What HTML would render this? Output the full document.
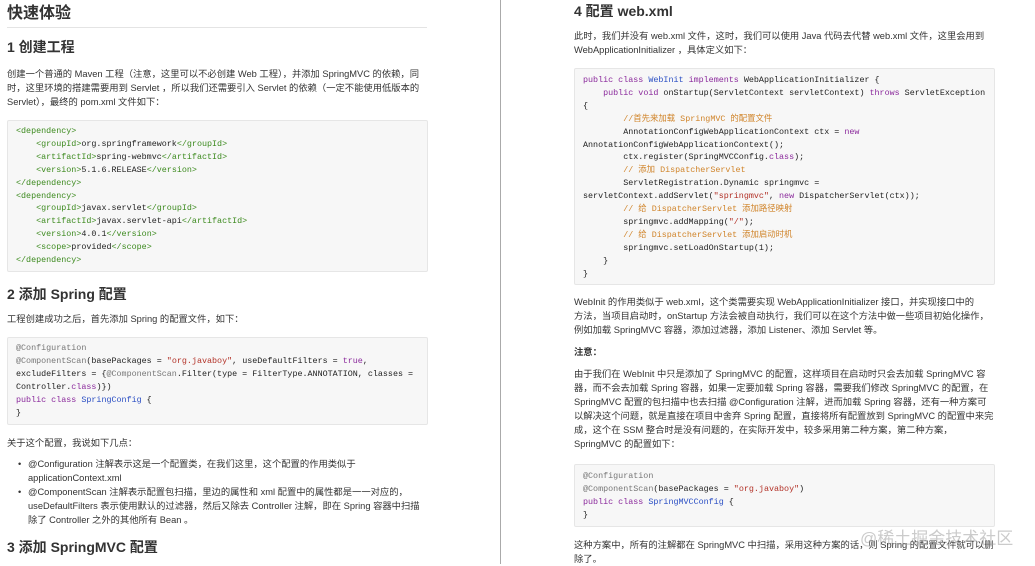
<!DOCTYPE html>
<html><head><meta charset="utf-8"><style>
*{margin:0;padding:0;box-sizing:border-box}
body{width:1035px;height:564px;background:#fff;position:relative;overflow:hidden;font-family:"Liberation Sans","Noto Sans CJK SC",sans-serif;color:#333}
.a{position:absolute;white-space:nowrap}
.p{font-size:9.3px;line-height:14px}
.h1{font-size:16px;font-weight:bold;line-height:20px}
.h2{font-size:14px;font-weight:bold;line-height:20px}
.box{position:absolute;background:#f7f7f7;border:1px solid #e6e6e6;border-radius:2px}
.c{position:absolute;font-family:"Liberation Mono","Noto Sans CJK SC",monospace;font-size:8.4px;line-height:12.9px;white-space:pre;color:#222}
.t{color:#3c8a1e}.k{color:#8b2a9c}.n{color:#2b4fc4}.s{color:#b23026}.m{color:#d0842a}.g{color:#777}
</style></head><body>
<div class="a" style="left:500px;top:0;width:1px;height:564px;background:#aaa"></div>

<div class="a h1" style="left:7px;top:4px">快速体验</div>
<div class="a" style="left:7px;top:27px;width:420px;height:1px;background:#e4e4e4"></div>
<div class="a h2" style="left:7px;top:37px">1 创建工程</div>
<div class="a p" style="left:7px;top:67px">创建一个普通的 Maven 工程（注意，这里可以不必创建 Web 工程），并添加 SpringMVC 的依赖，同<br>时，这里环境的搭建需要用到 Servlet ，所以我们还需要引入 Servlet 的依赖（一定不能使用低版本的<br>Servlet），最终的 pom.xml 文件如下：</div>
<div class="box" style="left:7px;top:120px;width:421px;height:152px"></div>
<div class="c" style="left:16px;top:125px"><span class="t">&lt;dependency&gt;</span>
    <span class="t">&lt;groupId&gt;</span>org.springframework<span class="t">&lt;/groupId&gt;</span>
    <span class="t">&lt;artifactId&gt;</span>spring-webmvc<span class="t">&lt;/artifactId&gt;</span>
    <span class="t">&lt;version&gt;</span>5.1.6.RELEASE<span class="t">&lt;/version&gt;</span>
<span class="t">&lt;/dependency&gt;</span>
<span class="t">&lt;dependency&gt;</span>
    <span class="t">&lt;groupId&gt;</span>javax.servlet<span class="t">&lt;/groupId&gt;</span>
    <span class="t">&lt;artifactId&gt;</span>javax.servlet-api<span class="t">&lt;/artifactId&gt;</span>
    <span class="t">&lt;version&gt;</span>4.0.1<span class="t">&lt;/version&gt;</span>
    <span class="t">&lt;scope&gt;</span>provided<span class="t">&lt;/scope&gt;</span>
<span class="t">&lt;/dependency&gt;</span></div>

<div class="a h2" style="left:7px;top:284px">2 添加 Spring 配置</div>
<div class="a p" style="left:7px;top:312px">工程创建成功之后，首先添加 Spring 的配置文件，如下：</div>
<div class="box" style="left:7px;top:337px;width:421px;height:88px"></div>
<div class="c" style="left:16px;top:342px"><span class="g">@Configuration</span>
<span class="g">@ComponentScan</span>(basePackages = <span class="s">"org.javaboy"</span>, useDefaultFilters = <span class="k">true</span>,
excludeFilters = {<span class="g">@ComponentScan</span>.Filter(type = FilterType.ANNOTATION, classes =
Controller.<span class="k">class</span>)})
<span class="k">public class</span> <span class="n">SpringConfig</span> {
}</div>
<div class="a p" style="left:7px;top:436px">关于这个配置，我说如下几点：</div>
<div class="a p" style="left:18px;top:457px">•</div>
<div class="a p" style="left:28px;top:457px">@Configuration 注解表示这是一个配置类，在我们这里，这个配置的作用类似于<br>applicationContext.xml</div>
<div class="a p" style="left:18px;top:485px">•</div>
<div class="a p" style="left:28px;top:485px">@ComponentScan 注解表示配置包扫描，里边的属性和 xml 配置中的属性都是一一对应的，<br>useDefaultFilters 表示使用默认的过滤器，然后又除去 Controller 注解，即在 Spring 容器中扫描<br>除了 Controller 之外的其他所有 Bean 。</div>
<div class="a h2" style="left:7px;top:537px">3 添加 SpringMVC 配置</div>

<div class="a h2" style="left:574px;top:1px">4 配置 web.xml</div>
<div class="a p" style="left:574px;top:29px">此时，我们并没有 web.xml 文件，这时，我们可以使用 Java 代码去代替 web.xml 文件，这里会用到<br>WebApplicationInitializer ，具体定义如下：</div>
<div class="box" style="left:574px;top:68px;width:421px;height:217px"></div>
<div class="c" style="left:583px;top:74px"><span class="k">public class</span> <span class="n">WebInit</span> <span class="k">implements</span> WebApplicationInitializer {
    <span class="k">public void</span> onStartup(ServletContext servletContext) <span class="k">throws</span> ServletException
{
        <span class="m">//首先来加载 SpringMVC 的配置文件</span>
        AnnotationConfigWebApplicationContext ctx = <span class="k">new</span>
AnnotationConfigWebApplicationContext();
        ctx.register(SpringMVCConfig.<span class="k">class</span>);
        <span class="m">// 添加 DispatcherServlet</span>
        ServletRegistration.Dynamic springmvc =
servletContext.addServlet(<span class="s">"springmvc"</span>, <span class="k">new</span> DispatcherServlet(ctx));
        <span class="m">// 给 DispatcherServlet 添加路径映射</span>
        springmvc.addMapping(<span class="s">"/"</span>);
        <span class="m">// 给 DispatcherServlet 添加启动时机</span>
        springmvc.setLoadOnStartup(1);
    }
}</div>
<div class="a p" style="left:574px;top:295px">WebInit 的作用类似于 web.xml，这个类需要实现 WebApplicationInitializer 接口，并实现接口中的<br>方法，当项目启动时，onStartup 方法会被自动执行，我们可以在这个方法中做一些项目初始化操作，<br>例如加载 SpringMVC 容器，添加过滤器，添加 Listener、添加 Servlet 等。</div>
<div class="a p" style="left:574px;top:345px;font-weight:bold">注意：</div>
<div class="a p" style="left:574px;top:367px">由于我们在 WebInit 中只是添加了 SpringMVC 的配置，这样项目在启动时只会去加载 SpringMVC 容<br>器，而不会去加载 Spring 容器，如果一定要加载 Spring 容器，需要我们修改 SpringMVC 的配置，在<br>SpringMVC 配置的包扫描中也去扫描 @Configuration 注解，进而加载 Spring 容器，还有一种方案可<br>以解决这个问题，就是直接在项目中舍弃 Spring 配置，直接将所有配置放到 SpringMVC 的配置中来完<br>成，这个在 SSM 整合时是没有问题的，在实际开发中，较多采用第二种方案，第二种方案，<br>SpringMVC 的配置如下：</div>
<div class="box" style="left:574px;top:464px;width:421px;height:63px"></div>
<div class="c" style="left:583px;top:470px"><span class="g">@Configuration</span>
<span class="g">@ComponentScan</span>(basePackages = <span class="s">"org.javaboy"</span>)
<span class="k">public class</span> <span class="n">SpringMVCConfig</span> {
}</div>
<div class="a p" style="left:574px;top:538px">这种方案中，所有的注解都在 SpringMVC 中扫描，采用这种方案的话，则 Spring 的配置文件就可以删<br>除了。</div>
<div class="a" style="left:860px;top:527px;font-size:17px;line-height:24px;color:rgba(160,160,160,0.55)">@稀土掘金技术社区</div>
</body></html>
